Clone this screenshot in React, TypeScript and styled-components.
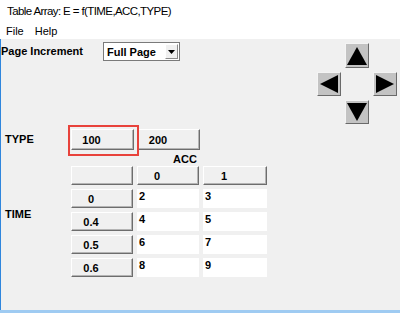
import React from 'react'
import styled, { createGlobalStyle } from 'styled-components'

const GlobalStyle = createGlobalStyle`
  html, body {
    margin: 0;
    padding: 0;
    background: #f0f0f0;
  }
  * {
    box-sizing: border-box;
  }
`

const Window = styled.div`
  width: 400px;
  height: 313px;
  display: flex;
  flex-direction: column;
  background: #f0f0f0;
  border-bottom: 3px solid #9fcbf2;
  font-family: 'Liberation Sans', Arial, sans-serif;
  color: #000;
  overflow: hidden;
`

const TitleBar = styled.div`
  height: 22px;
  padding: 5px 0 0 7px;
  background: #fff;
  font-size: 11.5px;
  letter-spacing: -0.6px;
  line-height: 13px;
  white-space: nowrap;
`

const MenuBar = styled.div`
  height: 17px;
  display: flex;
  gap: 11px;
  padding: 3px 0 0 6px;
  background: #fff;
  font-size: 11px;
  line-height: 13px;
`

const Body = styled.div`
  flex: 1;
  display: flex;
  flex-direction: column;
  border-left: 1px solid #2f86dd;
  padding: 4px 3px 0 0;
`

const TopSection = styled.div`
  display: flex;
  justify-content: space-between;
  align-items: flex-start;
`

const IncrementRow = styled.div`
  display: flex;
  align-items: center;
  margin-top: -1px;
`

const Label = styled.div<{ $width?: number; $top?: number; $left?: number }>`
  width: ${(p) => p.$width ?? 70}px;
  padding-top: ${(p) => p.$top ?? 0}px;
  padding-left: ${(p) => p.$left ?? 0}px;
  font-size: 11px;
  font-weight: bold;
  line-height: 13px;
  white-space: nowrap;
`

const Select = styled.div`
  width: 77px;
  height: 19px;
  display: flex;
  align-items: center;
  justify-content: space-between;
  padding: 0 1px 0 3px;
  background: #fff;
  border: 1px solid #7a7a7a;
  font-size: 11px;
  font-weight: bold;
`

const SelectArrow = styled.div`
  width: 13px;
  height: 15px;
  display: flex;
  align-items: center;
  justify-content: center;
  background: #f0f0f0;
  border: 1px solid;
  border-color: #fff #8a8a8a #8a8a8a #fff;
`

const Pad = styled.div`
  display: grid;
  grid-template-columns: repeat(3, 24px);
  grid-template-rows: 25px 24px 24px;
  gap: 4px;
`

const ArrowButton = styled.div<{ $col: number; $row: number }>`
  grid-column: ${(p) => p.$col};
  grid-row: ${(p) => p.$row};
  display: flex;
  align-items: center;
  justify-content: center;
  background: #c3c3c3;
  border: 1px solid;
  border-color: #f4f4f4 #6a6a6a #6a6a6a #f4f4f4;
`

const TypeRow = styled.div`
  display: flex;
  align-items: flex-start;
  margin-top: 5px;
`

const ButtonGroup = styled.div`
  display: flex;
  gap: 4px;
`

const Highlight = styled.div`
  position: relative;
`

const RedBox = styled.div`
  position: absolute;
  left: -3px;
  top: -4px;
  width: 71px;
  height: 31px;
  border: 2px solid #e8423b;
  pointer-events: none;
`

const Button = styled.div<{ $width?: number; $height?: number }>`
  width: ${(p) => p.$width ?? 62}px;
  height: ${(p) => p.$height ?? 19}px;
  display: flex;
  align-items: center;
  justify-content: center;
  padding-right: 22px;
  background: #f0f0f0;
  border: 1px solid;
  border-color: #fff #6d6d6d #6d6d6d #fff;
  box-shadow: inset -1px -1px 0 #b4b4b4;
  font-size: 11px;
  font-weight: bold;
`

const AccLabel = styled.div`
  height: 16px;
  padding: 4px 0 0 172px;
  font-size: 11px;
  font-weight: bold;
  line-height: 11px;
`

const TableSection = styled.div`
  display: flex;
  align-items: flex-start;
`

const Grid = styled.div`
  display: grid;
  grid-template-columns: 62px 62px 64px;
  grid-auto-rows: 19px;
  gap: 4px;
`

const Cell = styled.div`
  padding: 1px 2px;
  background: #fff;
  font-size: 11px;
  font-weight: bold;
  line-height: 12px;
`

const Triangle = ({ dir }: { dir: 'up' | 'down' | 'left' | 'right' }) => {
  const pts = {
    up: '10,0 20,18 0,18',
    down: '0,0 20,0 10,18',
    left: '0,9 18,0 18,18',
    right: '0,0 18,9 0,18',
  }[dir]
  const vertical = dir === 'up' || dir === 'down'
  return (
    <svg width={vertical ? 20 : 18} height={18} viewBox={vertical ? '0 0 20 18' : '0 0 18 18'}>
      <polygon points={pts} fill="#000" />
    </svg>
  )
}

const rows = [
  { time: '0', values: ['2', '3'] },
  { time: '0.4', values: ['4', '5'] },
  { time: '0.5', values: ['6', '7'] },
  { time: '0.6', values: ['8', '9'] },
]

const App: React.FC = () => {
  return (
    <>
      <GlobalStyle />
      <Window>
        <TitleBar>Table Array: E = f(TIME,ACC,TYPE)</TitleBar>
        <MenuBar>
          <span>File</span>
          <span>Help</span>
        </MenuBar>
        <Body>
          <TopSection>
            <IncrementRow>
              <Label $width={102}>Page Increment</Label>
              <Select>
                Full Page
                <SelectArrow>
                  <svg width="7" height="4" viewBox="0 0 7 4">
                    <polygon points="0,0 7,0 3.5,4" fill="#000" />
                  </svg>
                </SelectArrow>
              </Select>
            </IncrementRow>
            <Pad>
              <ArrowButton $col={2} $row={1}>
                <Triangle dir="up" />
              </ArrowButton>
              <ArrowButton $col={1} $row={2}>
                <Triangle dir="left" />
              </ArrowButton>
              <ArrowButton $col={3} $row={2}>
                <Triangle dir="right" />
              </ArrowButton>
              <ArrowButton $col={2} $row={3}>
                <Triangle dir="down" />
              </ArrowButton>
            </Pad>
          </TopSection>

          <TypeRow>
            <Label $top={4} $left={4}>TYPE</Label>
            <ButtonGroup>
              <Highlight>
                <Button $width={63} $height={21}>100</Button>
                <RedBox />
              </Highlight>
              <Button $width={62} $height={21}>200</Button>
            </ButtonGroup>
          </TypeRow>

          <AccLabel>ACC</AccLabel>

          <TableSection>
            <Label $top={42} $left={4}>TIME</Label>
            <Grid>
              <Button />
              <Button>0</Button>
              <Button $width={64}>1</Button>
              {rows.map((r) => (
                <React.Fragment key={r.time}>
                  <Button>{r.time}</Button>
                  {r.values.map((v) => (
                    <Cell key={v}>{v}</Cell>
                  ))}
                </React.Fragment>
              ))}
            </Grid>
          </TableSection>
        </Body>
      </Window>
    </>
  )
}

export default App
